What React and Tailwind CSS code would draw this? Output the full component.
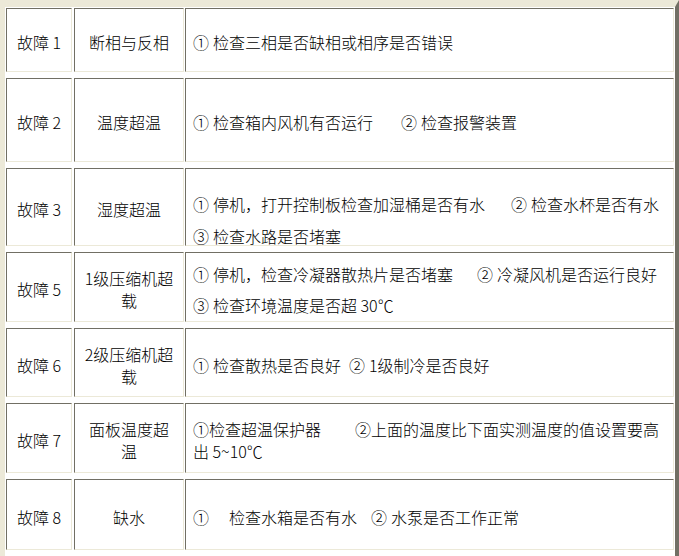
import React from 'react';

const font = { fontFamily: '"Noto Sans CJK SC", "Noto Sans", sans-serif' };

const cell =
  'border border-t-[#716f64] border-l-[#716f64] border-r-[#ece9d8] border-b-[#ece9d8] bg-white overflow-hidden';

const rows = [
  {
    h: 'h-[64px]',
    label: '故障 1',
    name: ['断相与反相'],
    body: (
      <div className="flex h-full items-center pt-[4px] leading-[22px]">
        <span>①</span>
        <span className="ml-[4px]">检查三相是否缺相或相序是否错误</span>
      </div>
    ),
  },
  {
    h: 'h-[84px]',
    label: '故障 2',
    name: ['温度超温'],
    body: (
      <div className="flex h-full items-center pt-[4px] leading-[22px]">
        <span>①</span>
        <span className="ml-[4px]">检查箱内风机有否运行</span>
        <span className="ml-[28px]">②</span>
        <span className="ml-[4px]">检查报警装置</span>
      </div>
    ),
  },
  {
    h: 'h-[78px]',
    label: '故障 3',
    name: ['湿度超温'],
    body: (
      <div className="h-full pt-[19px] leading-[32px]">
        <div className="flex">
          <span>①</span>
          <span className="ml-[4px]">停机，打开控制板检查加湿桶是否有水</span>
          <span className="ml-[26px]">②</span>
          <span className="ml-[4px]">检查水杯是否有水</span>
        </div>
        <div className="flex">
          <span>③</span>
          <span className="ml-[4px]">检查水路是否堵塞</span>
        </div>
      </div>
    ),
  },
  {
    h: 'h-[70px]',
    label: '故障 5',
    name: ['1级压缩机超', '载'],
    body: (
      <div className="flex h-full flex-col justify-center pt-[6px] leading-[31px]">
        <div className="flex">
          <span>①</span>
          <span className="ml-[4px]">停机，检查冷凝器散热片是否堵塞</span>
          <span className="ml-[24px]">②</span>
          <span className="ml-[4px]">冷凝风机是否运行良好</span>
        </div>
        <div className="flex">
          <span>③</span>
          <span className="ml-[4px]">检查环境温度是否超 30℃</span>
        </div>
      </div>
    ),
  },
  {
    h: 'h-[69px]',
    label: '故障 6',
    name: ['2级压缩机超', '载'],
    body: (
      <div className="flex h-full items-center pt-[4px] leading-[22px]">
        <span>①</span>
        <span className="ml-[4px]">检查散热是否良好</span>
        <span className="ml-[8px]">②</span>
        <span className="ml-[4px]">1级制冷是否良好</span>
      </div>
    ),
  },
  {
    h: 'h-[70px]',
    label: '故障 7',
    name: ['面板温度超', '温'],
    body: (
      <div className="flex h-full flex-col justify-center pt-[4px] leading-[22px]">
        <div className="flex">
          <span>①检查超温保护器</span>
          <span className="ml-[34px]">②上面的温度比下面实测温度的值设置要高</span>
        </div>
        <div>出 5~10℃</div>
      </div>
    ),
  },
  {
    h: 'h-[71px]',
    label: '故障 8',
    name: ['缺水'],
    body: (
      <div className="flex h-full items-center pt-[4px] leading-[22px]">
        <span>①</span>
        <span className="ml-[20px]">检查水箱是否有水</span>
        <span className="ml-[14px]">②</span>
        <span className="ml-[4px]">水泵是否工作正常</span>
      </div>
    ),
  },
];

function Row({ row }) {
  return (
    <div className={`flex ${row.h}`}>
      <div className={`${cell} flex w-[66px] shrink-0 items-center justify-center pt-[4px] leading-[22px]`}>
        {row.label}
      </div>
      <div
        className={`${cell} ml-[2px] flex w-[110px] shrink-0 flex-col items-center justify-center pt-[4px] text-center leading-[22px]`}
      >
        {row.name.map((n) => (
          <div key={n}>{n}</div>
        ))}
      </div>
      <div className={`${cell} ml-px flex-1 pl-[7px]`}>{row.body}</div>
    </div>
  );
}

export default function App() {
  return (
    <div className="min-h-screen bg-white text-[16px] font-light text-black" style={font}>
      <div className="flex w-[679px] flex-col gap-[6px] border-t-[7px] border-r-[4px] border-l-[5px] border-t-[#ece9d8] border-r-[#716f64] border-l-[#ece9d8] bg-white p-px pb-[6px]">
        {rows.map((row) => (
          <Row key={row.label} row={row} />
        ))}
      </div>
    </div>
  );
}
